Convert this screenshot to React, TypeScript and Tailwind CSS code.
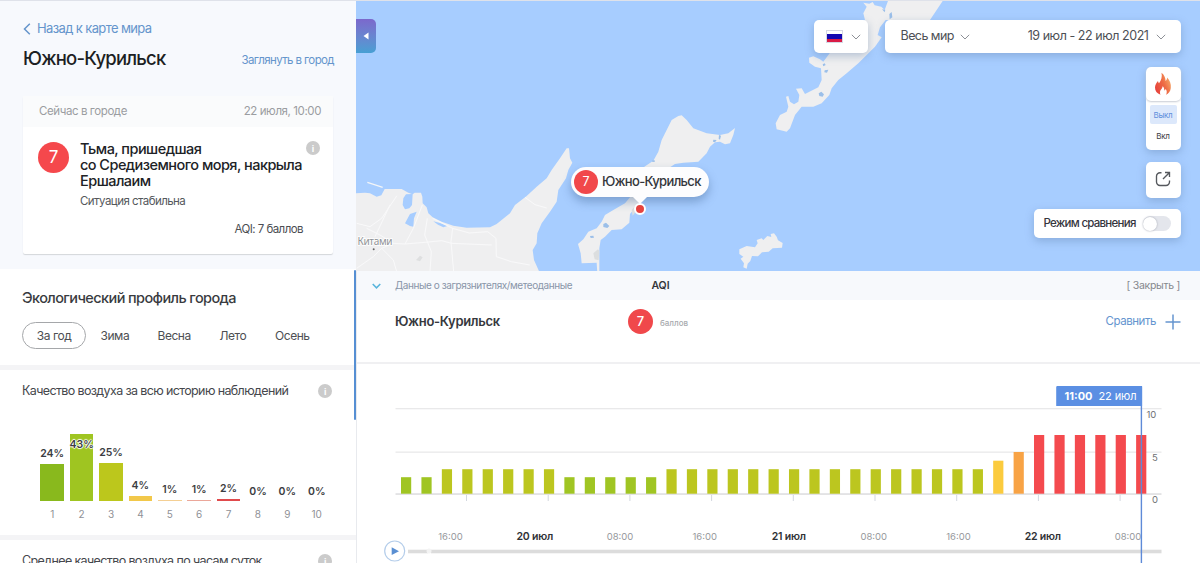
import React from "react";

const FONT = "font-['Inter','Liberation_Sans',sans-serif]";

const distribution = [
  { level: 1, share: 24, height: 37, color: "#89b91d", lift: 4 },
  { level: 2, share: 43, height: 67, color: "#9fc521", lift: -17 },
  { level: 3, share: 25, height: 38, color: "#bcc71c", lift: 4 },
  { level: 4, share: 4, height: 5, color: "#f2c84a", lift: 4 },
  { level: 5, share: 1, height: 1, color: "#f4cf94", lift: 4 },
  { level: 6, share: 1, height: 1, color: "#eba79a", lift: 4 },
  { level: 7, share: 2, height: 2, color: "#e04a4c", lift: 4 },
  { level: 8, share: 0, height: 0, color: "#ffffff", lift: 3 },
  { level: 9, share: 0, height: 0, color: "#ffffff", lift: 3 },
  { level: 10, share: 0, height: 0, color: "#ffffff", lift: 3 },
];

const hours = [2, 2, 3, 3, 3, 3, 3, 3, 2, 2, 2, 2, 2, 3, 3, 3, 3, 3, 3, 3, 3, 3, 3, 3, 3, 3, 3, 3, 3, 4, 5, 7, 7, 7, 7, 7, 7];
const barHeight: Record<number, number> = { 2: 16.5, 3: 24.5, 4: 33, 5: 41.7, 7: 58.7 };
const barColor: Record<number, string> = { 2: "#a0c523", 3: "#bcc61f", 4: "#fbcb3e", 5: "#f8a345", 7: "#f44a4e" };

const timeline = [
  { x: 450.5, text: "16:00" },
  { x: 534.7, text: "20 июл", day: true },
  { x: 620, text: "08:00" },
  { x: 704.7, text: "16:00" },
  { x: 788.7, text: "21 июл", day: true },
  { x: 873.7, text: "08:00" },
  { x: 958.5, text: "16:00" },
  { x: 1042.8, text: "22 июл", day: true },
  { x: 1128, text: "08:00" },
];

function Info() {
  return (
    <span className="flex size-[14px] shrink-0 items-center justify-center rounded-full bg-[#cbcbcb] text-[9px] font-bold leading-none text-white">
      i
    </span>
  );
}

function Chevron({ className }: { className: string }) {
  return (
    <svg viewBox="0 0 10 6" className={className} fill="none" stroke="currentColor">
      <path d="M.8.8 5 5 9.2.8" />
    </svg>
  );
}

function Sidebar() {
  return (
    <aside className="flex w-[356px] shrink-0 flex-col bg-white">
      <section className="h-[268px] shrink-0 bg-[#f7f9fd] pl-[23px] pr-[22px]">
        <div className="flex h-[36px] items-end gap-[6px] text-[#6595cc]">
          <svg viewBox="0 0 8 12" className="mb-[2.5px] h-[12px] w-[8px]" fill="none" stroke="currentColor" strokeWidth="1.5">
            <path d="M6.8.8 1.500 6l5.300 5.200" />
          </svg>
          <span className="text-[13px] leading-[17px] tracking-[-0.62px]">Назад к карте мира</span>
        </div>
        <div className="flex h-[43px] items-center justify-between">
          <h1 className="text-[18.5px] font-medium tracking-[-0.78px] text-[#1d1f23]">Южно-Курильск</h1>
          <span className="pt-[4px] text-[11.5px] tracking-[-0.6px] text-[#6595cc]">Заглянуть в город</span>
        </div>
        <div className="mt-[16px] h-[158px] w-[310px] rounded-[2px] bg-white shadow-[0_1px_1px_#d3d6da]">
          <div className="flex h-[31px] items-center justify-between bg-[#fafbfc] pl-[16px] pr-[12px] text-[11.5px] tracking-[-0.41px] text-[#9b9da1]">
            <span>Сейчас в городе</span>
            <span>22 июля, 10:00</span>
          </div>
          <div className="flex pl-[15px] pr-[13px] pt-[14px]">
            <div className="mt-[1px] flex size-[31px] shrink-0 items-center justify-center rounded-full bg-[#f5484c] text-[17px] text-white">7</div>
            <div className="ml-[11px] w-[226px]">
              <h2 className="whitespace-nowrap text-[14.5px] font-medium leading-[15.8px] tracking-[-0.54px] text-[#202226]">
                Тьма, пришедшая
                <br />
                со Средиземного моря, накрыла
                <br />
                Ершалаим
              </h2>
              <p className="mt-[5px] text-[11.5px] leading-[16px] tracking-[-0.55px] text-[#55585c]">Ситуация стабильна</p>
              <p className="mt-[12px] pr-[3px] text-right text-[11.5px] leading-[16px] tracking-[-0.55px] text-[#4b4e52]">AQI: 7 баллов</p>
            </div>
            <Info />
          </div>
        </div>
      </section>

      <section className="h-[96px] shrink-0 pl-[22px]">
        <h3 className="pt-[19px] text-[14.5px] font-medium leading-[20px] tracking-[-0.6px] text-[#393b40]">Экологический профиль города</h3>
        <div className="mt-[14px] flex h-[27px] items-center text-[12px] tracking-[-0.45px] text-[#4d4f53]">
          <span className="flex h-[27px] w-[64px] items-center justify-center rounded-full border border-[#a5a7aa]">За год</span>
          <span className="ml-[14.5px] w-[57px]">Зима</span>
          <span className="w-[62px]">Весна</span>
          <span className="w-[55.5px]">Лето</span>
          <span>Осень</span>
        </div>
      </section>

      <section className="h-[170px] shrink-0 border-t-[5px] border-[#f4f4f6] pl-[22px] pr-[24px]">
        <div className="flex h-[42px] items-center justify-between text-[12.5px] tracking-[-0.63px] text-[#45474c]">
          <span>Качество воздуха за всю историю наблюдений</span>
          <Info />
        </div>
        <div className="ml-[15.5px] mt-[9px] flex">
          {distribution.map((d) => (
            <div key={d.level} className="flex w-[29.4px] flex-col items-center">
              <div className="flex h-[80px] w-full flex-col items-center justify-end">
                <span
                  className="relative z-10 text-[10.5px] font-semibold leading-[13px] text-[#3b3d42] [text-shadow:0_0_1px_#fff,1px_0_1px_#fff,-1px_0_1px_#fff,0_1px_1px_#fff,0_-1px_1px_#fff]"
                  style={{ marginBottom: d.lift }}
                >
                  {d.share}%
                </span>
                <div className="w-[23.5px] shrink-0" style={{ height: d.height, backgroundColor: d.color }} />
              </div>
              <span className="mt-[6px] text-[10px] leading-[14px] text-[#8f9196]">{d.level}</span>
            </div>
          ))}
        </div>
      </section>

      <section className="h-[60px] shrink-0 border-t-[5px] border-[#f4f4f6] pl-[22px] pr-[24px]">
        <div className="flex h-[42px] items-center justify-between text-[12.5px] tracking-[-0.62px] text-[#45474c]">
          <span>Среднее качество воздуха по часам суток</span>
          <Info />
        </div>
      </section>
    </aside>
  );
}

function MapLand() {
  return (
    <svg viewBox="356 1 844 270" className="block h-[270px] w-[844px]">
      <rect x="356" y="1" width="844" height="270" fill="#a7cdff" />
      <g transform="translate(350 90) scale(.33333)">
        <path fill="#efeff0" d="M15 310 45 308 60 310 80 320 94 316 104 297 155 297 175 308 188 313 194 308 213 308 217 320 218 340 230 352 235 370 248 382 275 395 310 407 350 413 420 412 440 402 480 370 495 345 530 318 560 290 590 265 605 240 630 205 650 175 657 175 660 205 667 218 655 240 648 265 625 300 620 335 600 365 575 400 562 430 560 460 548 480 552 510 570 550H15Z" />
        <path fill="none" stroke="#f3f5f8" strokeWidth="4" d="m52 277 28 9 18 6" />
        <path fill="#a7cdff" d="m160 325 8-12 20-1-2 33-8 10-13 3-7-13Zm5 75 15-28 20-7-8 20-2 25-10-2Zm85-6 20 5 22 9-12 4-16-8Z" />
        <g fill="none" stroke="#f9f9fa" strokeWidth="3">
          <path d="M20 535 70 500 95 475 130 460 165 462 190 415 217 345" />
          <path d="M20 400 60 410 95 385 140 318" />
          <path d="m75 440 45-95M95 475l35 35 10 35M165 462l60-5 50-5 30 8 120 5M232 385l-8 50 20 50-4 60" />
          <path d="m248 385 60 30 50 14 55-4 25 20 1 55 45 15 55 10M308 415l-5 40 8 90M525 322l30 22 35 10M130 460l-40-25-40-20" />
        </g>
        <path fill="#dedfe0" d="m198 510 12-13 8 5-8 12Z" />
        <circle cx="71" cy="478" r="3" fill="#666" />
      </g>
      <g transform="translate(550 90) scale(.33333)">
        <path fill="#efeff0" d="M283 230 310 212 325 185 335 150 350 120 365 90 385 78 395 76 410 90 430 115 470 130 510 135 535 130 555 114 550 135 540 160 525 163 510 155 495 157 480 170 470 190 445 215 400 218 375 222 360 232 300 300 262 345 240 372 238 398 215 418 185 420 165 440 152 450 148 475 148 550H142L140 518 95 520 92 490 84 462 100 448 115 425 140 415 155 395 165 375 190 360 225 340 240 322Z" />
        <path fill="#9bbfe9" d="m160 402 8-4 10 10-6 6-12-3Zm-40 36 10-1 2 6-10 1Zm370-289 10 1-5 7-6-2Zm17-14 6 2-3 12-4-3ZM305 212l8-2 2 5-7 1Z" />
        <path fill="#dcdedf" d="m130 490 14-12 4 5-2 28-12-3Zm115-130 15-18-4 25-8 10Z" />
        <path fill="#efeff0" d="m568 478 22-10 25 4 8-12-3-10 15-5 5 5 12-12 12 3-2-9 10-2 8 10 4 11 14 8-2 14-28 2-12 10-20 2-12 12-18-1-5 15-8 8-3 15-10-4 2-12-10-14 8-6-12-8Z" />
      </g>
      <g transform="translate(740 0) scale(.33333)">
        <path fill="#efeff0" d="m370 8 18 3 10-5 6 10 20 4 10 10L445 0H610L590 30 570 60H437L420 82 413 105 425 112 405 140 380 165 355 190 320 220 295 240 275 265 268 285 245 310 220 320 185 320 165 345 150 385 140 395 110 388 107 370 120 345 140 335 145 320 138 290 145 288 150 305 162 313 175 305 178 285 168 266 185 265 195 282 235 262 245 240 243 205 225 200 208 188 207 173 220 169 240 178 250 185 270 158 375 60 370 40 380 20Z" />
        <path fill="#9bbfe9" d="m236 280 8-5 8 8-4 7-10-2Zm18-69 11-2-4 9-8-1Zm-6-18 6-3 3 5-7 4ZM448 42l7-6 2 16-8 6Zm-22-14 10 1-2 8Z" />
      </g>
      <text x="357.5" y="245" className="fill-[#909296] font-['Noto_Sans',sans-serif] text-[10px] tracking-[-0.3px] [paint-order:stroke] [stroke:#fff] [stroke-width:1.5px]">Китами</text>
    </svg>
  );
}

function MapControls() {
  return (
    <div className="absolute right-[19.5px] top-[19px] flex flex-col items-end">
      <div className="flex gap-[17px]">
        <div className="flex h-[33px] w-[54px] items-center gap-[8px] rounded-[5px] bg-white pl-[12px] shadow-[0_3px_8px_#5c7ea866]">
          <div className="flex h-[13px] w-[17px] flex-col border border-[#d5d8e4]">
            <div className="h-[3px] bg-white" />
            <div className="h-[5px] bg-[#1408b0]" />
            <div className="h-[3px] grow bg-[#d91b45]" />
          </div>
          <Chevron className="h-[6px] w-[10px] text-[#8d9096]" />
        </div>
        <div className="flex h-[33px] w-[296px] items-center rounded-[5px] bg-white pl-[16px] pr-[15px] text-[12.5px] text-[#4d5055] shadow-[0_3px_8px_#5c7ea866]">
          <span className="tracking-[-0.55px]">Весь мир</span>
          <Chevron className="ml-[6px] h-[6px] w-[10px] text-[#8d9096]" />
          <span className="ml-auto tracking-[-0.45px]">19 июл - 22 июл 2021</span>
          <Chevron className="ml-[7px] h-[6px] w-[10px] text-[#8d9096]" />
        </div>
      </div>
      <div className="mt-[14px] flex h-[83px] w-[35px] flex-col items-center rounded-[5px] bg-white text-[8px] shadow-[0_3px_8px_#5c7ea866]">
        <div className="flex h-[34px] w-full items-center justify-center rounded-[5px] shadow-[0_1px_2px_#c8ccd4]">
          <svg viewBox="0 0 18 24" className="h-[24px] w-[18px]">
            <defs>
              <linearGradient id="flame" x1="0" y1="0.8" x2="1" y2="0.2">
                <stop offset="0" stopColor="#e63f3c" />
                <stop offset="0.55" stopColor="#ee6c45" />
                <stop offset="1" stopColor="#f7b36e" />
              </linearGradient>
            </defs>
            <path fill="url(#flame)" d="M7.500.8C10.500 3.200 11.500 6 11.600 9c1-.8 1.500-2 1.500-3.400C15.800 8.600 17.300 12 16.800 16c-.4 3.500-2.300 5.700-4.800 6.800 1.200-2.200.9-4.200-.3-5.800-.4.9-.8 1.300-1.400 1.600.1-2-.5-3.400-1.700-4.400-.1 2.200-2 3.300-2.500 5-.3 1.300-.1 2.500.4 3.600C3 21.600.9 19 1 15.300c.1-2.900 1.700-4.700 3-6.400.1 1 .4 1.700 1 2.300C7.300 8.500 8.400 5 7.500.8Z" />
          </svg>
        </div>
        <div className="mt-[4px] flex h-[19px] w-[27px] items-center justify-center rounded-[2px] bg-[#dce8fb] tracking-[-0.3px] text-[#5f8fdc]">Выкл</div>
        <div className="mt-[2px] flex h-[20px] items-center tracking-[-0.2px] text-[#3d4044]">Вкл</div>
      </div>
      <div className="mt-[12px] flex h-[36px] w-[35px] items-center justify-center rounded-[5px] bg-white shadow-[0_3px_8px_#5c7ea866]">
        <svg viewBox="0 0 16 16" className="mb-[2px] size-[16px]" fill="none" stroke="#55585d" strokeWidth="1.35">
          <path d="M6.500 1.700H5A3.500 3.500 0 0 0 1.500 5.200V11A3.500 3.500 0 0 0 5 14.500h6A3.500 3.500 0 0 0 14.500 11V9.500M10 1.500h4.500V6M14.300 1.700 8 8" />
        </svg>
      </div>
      <div className="mt-[11px] flex h-[29px] w-[147px] items-center justify-between rounded-[5px] bg-white pl-[10px] pr-[10px] shadow-[0_3px_8px_#5c7ea866]">
        <span className="whitespace-nowrap text-[11.5px] font-medium tracking-[-0.74px] text-[#35353d]">Режим сравнения</span>
        <div className="flex h-[15px] w-[28px] items-center rounded-full bg-[#e4e6ec]">
          <div className="size-[14px] rounded-full bg-white shadow-[0_0_2px_#9a9fab]" />
        </div>
      </div>
    </div>
  );
}

function CityPin() {
  return (
    <div className="absolute left-[215px] top-[166px] flex h-[30px] w-[138px] items-center rounded-full bg-[#fdfdfe] pl-[3px] shadow-[0_5px_10px_#3c5f8c66]">
      <div className="flex size-[24px] items-center justify-center rounded-full bg-[#f1484b] text-[12.5px] text-white">7</div>
      <span className="ml-[4px] text-[13px] font-medium tracking-[-0.65px] text-[#34363b]">Южно-Курильск</span>
      <div className="absolute left-[61px] top-[29px] h-[8px] w-[16px] bg-[#fdfdfe] [clip-path:polygon(0_0,100%_0,50%_100%)]" />
      <div className="absolute left-[62.5px] top-[36px] size-[12px] rounded-full border-2 border-white bg-[#e5433f]" />
    </div>
  );
}

function Chart() {
  return (
    <svg viewBox="357 364 843 199" className="block h-[199px] w-[843px] shrink-0">
      <g fill="#e9e9ea">
        <rect x="395.5" y="408" width="766" height="1.3" />
        <rect x="395.5" y="451.5" width="766" height="1.3" />
        <rect x="395.5" y="493.3" width="766" height="1.5" fill="#dcdcde" />
      </g>
      {hours.map((v, i) => (
        <g key={i}>
          <rect x={401 + i * 20.42} y={493.7 - barHeight[v]} width="10.2" height={barHeight[v]} fill={barColor[v]} />
          {i % 4 === 3 && <rect x={466 + ((i - 3) / 4) * 81.7} y="495" width="1" height="6" fill="#d3d8df" />}
        </g>
      ))}
      <g className="fill-[#6f7175] text-[9.5px]">
        <text x="1146.5" y="418">10</text>
        <text x="1152" y="461">5</text>
        <text x="1152" y="502.5">0</text>
      </g>
      {timeline.map((t) => (
        <text
          key={t.x}
          x={t.x}
          y="539.5"
          textAnchor="middle"
          className={t.day ? "fill-[#303236] text-[10.5px] font-semibold tracking-[-0.2px]" : "fill-[#96989c] text-[9.5px]"}
        >
          {t.text}
        </text>
      ))}
      <rect x="408" y="549.7" width="20" height="3.6" fill="#dcdcdc" />
      <rect x="431" y="549.7" width="730.5" height="3.6" fill="#dcdcdc" />
      <circle cx="429" cy="551" r="2.5" fill="#f3f3f3" />
      <circle cx="394.7" cy="551" r="10" fill="#fff" stroke="#b4cdea" strokeWidth="1.2" />
      <path d="M391.7 547.3 399 551.2 391.7 555Z" fill="#5a8fd2" />
      <rect x="1140.7" y="386" width="1.4" height="177" fill="#5e8ad8" />
      <path d="M1056.2 387.2q0-1.2 1.2-1.2h83.5q1.2 0 1.2 1.2V406h-85.900Z" fill="#5b8fe3" />
      <text x="1064.5" y="400" className="fill-white text-[11px] font-bold">11:00</text>
      <text x="1098.5" y="400" className="fill-white text-[11px] tracking-[-0.1px]">22 июл</text>
    </svg>
  );
}

export default function App() {
  return (
    <div className={`relative flex h-[563px] w-[1200px] overflow-hidden border-t border-[#dfe2ea] bg-white ${FONT}`}>
      <Sidebar />
      <main className="flex w-[844px] shrink-0 flex-col">
        <div className="relative h-[270px] shrink-0">
          <MapLand />
          <div className="absolute left-0 top-[18px] flex h-[34px] w-[20px] items-center justify-center rounded-r-[5px] bg-gradient-to-b from-[#7b68cc] to-[#469fd3]">
            <svg viewBox="0 0 6 8" className="h-[8px] w-[6px]" fill="#fff">
              <path d="M5.5.5v7L.5 4Z" />
            </svg>
          </div>
          <CityPin />
          <MapControls />
        </div>
        <div className="flex grow flex-col border-l border-[#e8eaee]">
          <div className="flex h-[29px] shrink-0 items-center bg-[#f7f9fc] pl-[15px] pr-[20px] text-[10.5px] text-[#8995a8]">
            <Chevron className="h-[6px] w-[9px] text-[#58b5dc] [stroke-width:1.7]" />
            <span className="ml-[14px] w-[256.5px] whitespace-nowrap text-[10px] tracking-[-0.42px]">Данные о загрязнителях/метеоданные</span>
            <span className="text-[10.5px] font-semibold tracking-[-0.1px] text-[#33353a]">AQI</span>
            <span className="ml-auto tracking-[-0.3px] text-[#85888d]">[ Закрыть ]</span>
          </div>
          <div className="flex h-[64px] shrink-0 border-b-2 border-[#f0f0f2] pl-[38px] pr-[19px]">
            <div className="flex h-[43px] grow items-center">
              <span className="w-[233px] pt-[1px] text-[13px] font-semibold tracking-[-0.32px] text-[#36383d]">Южно-Курильск</span>
              <div className="flex size-[25px] items-center justify-center rounded-full bg-[#f0484b] text-[13px] font-medium text-white">7</div>
              <span className="ml-[7px] mt-[3px] text-[8px] font-medium text-[#a8aaae]">баллов</span>
              <span className="ml-auto text-[11.5px] tracking-[-0.45px] text-[#6595cf]">Сравнить</span>
              <svg viewBox="0 0 16 16" className="ml-[9px] size-[16px]" stroke="#6595cf" strokeWidth="1.5">
                <path d="M8 .5v15M.5 8h15" />
              </svg>
            </div>
          </div>
          <Chart />
        </div>
      </main>
      <div className="absolute left-[354px] top-[269px] h-[150px] w-[2px] rounded-full bg-[#568fd3]" />
    </div>
  );
}
